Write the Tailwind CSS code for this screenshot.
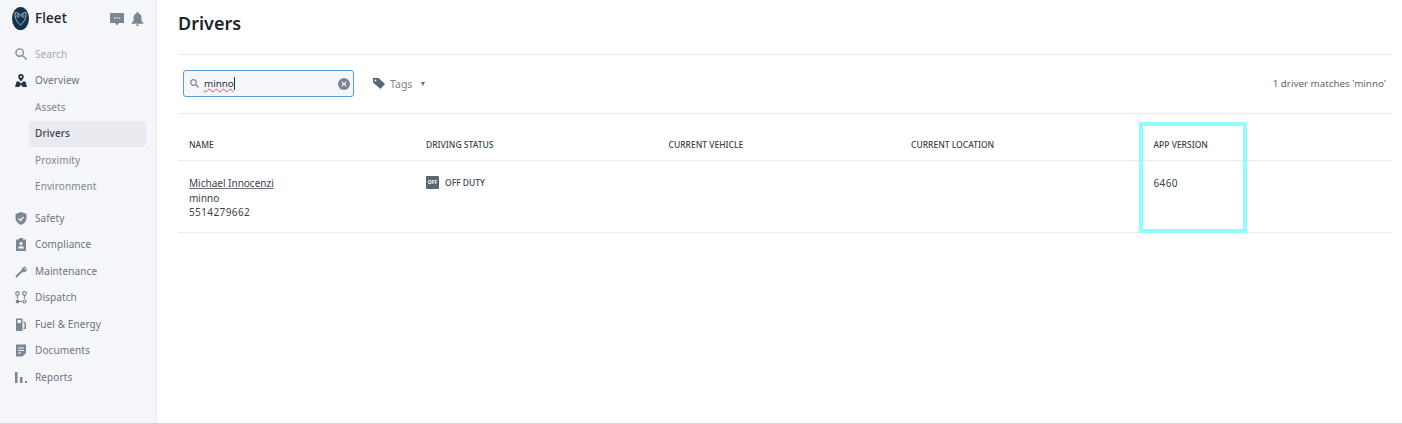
<!DOCTYPE html>
<html lang="en">
<head>
  <meta charset="UTF-8" />
  <title>Fleet - Drivers</title>
  <script src="https://cdn.jsdelivr.net/npm/@tailwindcss/browser@4"></script>
</head>
<body class="bg-white text-[#2b2f36] font-['Noto_Sans',sans-serif] overflow-hidden">
  <div class="flex h-[423px] w-[1402px] border-b border-[#d5d7da] box-content">
    <!-- Sidebar -->
    <aside class="w-[157px] shrink-0 bg-[#f5f6f9] border-r border-[#eceef2] pt-[5px] text-[10px] tracking-[0.1px] text-[#6b7480]">
      <div class="flex items-center h-[27px] pl-[12px] pr-[12px]">
        <svg class="w-[17px] h-[23px]" viewBox="0 0 17 23"><ellipse cx="8.5" cy="11.5" rx="8.5" ry="11.5" fill="#12344a"/><path d="M3 5.500c2 0 4 1 5.500 2.500C10 6.500 12 5.500 14 5.500c.5 4-1 9-5.500 12.500C4 14.500 2.500 9.500 3 5.500z" fill="none" stroke="#b9c6cf" stroke-width=".9"/><circle cx="6" cy="9" r="1.300" fill="none" stroke="#b9c6cf" stroke-width=".7"/><circle cx="11" cy="9" r="1.300" fill="none" stroke="#b9c6cf" stroke-width=".7"/></svg>
        <span class="ml-[6px] text-[13.500px] font-medium text-[#1e2329]">Fleet</span>
        <svg class="ml-auto w-[14px] h-[14px]" viewBox="0 0 14 14" fill="#7c8794"><path d="M0 1h14v10H9l-2 2.500L5 11H0z"/><circle cx="4.500" cy="6" r=".8" fill="#f5f6f9"/><circle cx="7" cy="6" r=".8" fill="#f5f6f9"/><circle cx="9.500" cy="6" r=".8" fill="#f5f6f9"/></svg>
        <svg class="ml-[7px] w-[13px] h-[14px]" viewBox="0 0 13 14" fill="#7c8794"><path d="M6.500 0a1 1 0 0 1 1 1.200C9.500 1.800 10.500 3.500 10.500 6v3l2 2v.8H.5V11l2-2V6c0-2.500 1-4.200 3-4.800A1 1 0 0 1 6.500 0zM5 12.500h3a1.500 1.500 0 0 1-3 0z"/></svg>
      </div>
      <nav class="mt-[9px]">
        <div class="flex items-center h-[26.5px] text-[#a3aab3]">
          <svg class="ml-[15px] w-[12px] h-[12px]" viewBox="0 0 13 13" fill="none" stroke="#7c8794" stroke-width="1.500"><circle cx="5" cy="5" r="4"/><path d="M8 8l4.500 4.500"/></svg>
          <span class="ml-[8px]">Search</span>
        </div>
        <div class="flex items-center h-[26.5px]">
          <svg class="ml-[15px] w-[12px] h-[13px]" viewBox="0 0 12 13" fill="#243746"><path fill-rule="evenodd" d="M6 0a2.800 2.800 0 0 1 2.800 2.800C8.800 4.500 6 7.500 6 7.500S3.200 4.500 3.200 2.800A2.800 2.800 0 0 1 6 0zm0 1.800a1 1 0 1 0 0 2 1 1 0 0 0 0-2z"/><path d="M1.500 7.500h2.500L6 9.500l2-2h2.500L12 13H8L6 11 4 13H0z"/></svg>
          <span class="ml-[8px]">Overview</span>
        </div>
        <div class="flex items-center h-[26.5px] pl-[35px] text-[#7d858f]">Assets</div>
        <div class="flex items-center h-[26.5px] ml-[29px] mr-[10px] pl-[6px] rounded-[4px] bg-[#e8eaef] text-[#3a3f4a] font-medium">Drivers</div>
        <div class="flex items-center h-[26.5px] pl-[35px] text-[#7d858f]">Proximity</div>
        <div class="flex items-center h-[26.5px] pl-[35px] text-[#7d858f]">Environment</div>
        <div class="mt-[5px]">
          <div class="flex items-center h-[26.5px]">
            <svg class="ml-[15px] w-[12px] h-[13px]" viewBox="0 0 12 13" fill="#7c8794"><path d="M6 0l5.500 2v4c0 3.200-2.200 5.800-5.500 7C2.700 11.800.5 9.200.5 6V2z"/><path d="M3.500 6.500l2 2 3-3.500" fill="none" stroke="#f5f6f9" stroke-width="1.200"/></svg>
            <span class="ml-[8px]">Safety</span>
          </div>
          <div class="flex items-center h-[26.5px]">
            <svg class="ml-[15px] w-[12px] h-[13px]" viewBox="0 0 12 13" fill="#7c8794"><path d="M1 1.500h3V0h4v1.500h3V13H1z"/><circle cx="6" cy="5.500" r="1.500" fill="#f5f6f9"/><path d="M3 10.500c0-1.500 1.500-2.500 3-2.500s3 1 3 2.500z" fill="#f5f6f9"/></svg>
            <span class="ml-[8px]">Compliance</span>
          </div>
          <div class="flex items-center h-[26.5px]">
            <svg class="ml-[15px] w-[12px] h-[13px]" viewBox="0 0 12 13" fill="none" stroke="#7c8794" stroke-width="2"><path d="M1 12l6-6"/><path d="M7 6.500C6 4 8 1.500 11 2L9 4l1 1 2-1.500C12 6.500 9.500 7.500 7 6.500z" fill="#7c8794" stroke-width=".5"/></svg>
            <span class="ml-[8px]">Maintenance</span>
          </div>
          <div class="flex items-center h-[26.5px]">
            <svg class="ml-[15px] w-[12px] h-[13px]" viewBox="0 0 12 13" fill="none" stroke="#7c8794" stroke-width="1.200"><circle cx="2.500" cy="2.500" r="1.800"/><circle cx="9.500" cy="2.500" r="1.800"/><path d="M2.500 4.500v3M9.500 4.500v3M2.500 10.500h5"/><circle cx="2.500" cy="10.500" r="1.300" fill="#7c8794"/><circle cx="9.500" cy="10.500" r="1.500"/></svg>
            <span class="ml-[8px]">Dispatch</span>
          </div>
          <div class="flex items-center h-[26.5px]">
            <svg class="ml-[15px] w-[12px] h-[13px]" viewBox="0 0 12 13" fill="#7c8794"><path d="M1 .5h6.500V13H1z"/><path d="M8.500 3l2.500 2v6h-2.500V9.500h1V5.500l-1-1z"/><rect x="2.500" y="2" width="3.500" height="3" fill="#f5f6f9"/></svg>
            <span class="ml-[8px]">Fuel &amp; Energy</span>
          </div>
          <div class="flex items-center h-[26.5px]">
            <svg class="ml-[15px] w-[12px] h-[13px]" viewBox="0 0 12 13" fill="#7c8794"><path d="M1 .5h10v8.500L7.500 12.500H1z"/><path d="M3 4h6M3 6.500h6M3 9h3" stroke="#f5f6f9" stroke-width="1"/></svg>
            <span class="ml-[8px]">Documents</span>
          </div>
          <div class="flex items-center h-[26.5px]">
            <svg class="ml-[15px] w-[12px] h-[13px]" viewBox="0 0 12 13" fill="#7c8794"><rect x="0" y="1" width="2.500" height="11"/><rect x="5" y="6" width="2.500" height="6"/><rect x="10" y="10" width="2" height="2"/></svg>
            <span class="ml-[8px]">Reports</span>
          </div>
        </div>
      </nav>
    </aside>

    <!-- Main -->
    <main class="relative flex-1 pl-[21px] pr-[10px]">
      <h1 class="h-[55px] pt-[10px] text-[18px] leading-[27px] font-semibold text-[#1e2329] border-b border-[#e9ebee]">Drivers</h1>

      <!-- Toolbar -->
      <div class="flex items-center h-[59px] pl-[5px] pr-[6px] pb-[1px] border-b border-[#e9ebee]">
        <div class="flex items-center w-[171px] h-[27px] rounded-[3px] border border-[#5b9bdc] bg-[#f5f6f9] pl-[6px] pr-[3px]">
          <svg class="w-[9px] h-[9px]" viewBox="0 0 9 9" fill="none" stroke="#7c8794" stroke-width="1.200"><circle cx="3.500" cy="3.500" r="2.800"/><path d="M5.500 5.500L8.500 8.500"/></svg>
          <span class="ml-[5px] text-[9.800px] text-[#2b2f36] underline decoration-wavy decoration-[#e0524d] decoration-[1px] border-r border-[#2b2f36] leading-[13px]">minno</span>
          <svg class="ml-auto w-[12px] h-[12px]" viewBox="0 0 12 12"><circle cx="6" cy="6" r="6" fill="#7c8794"/><path d="M3.800 3.800l4.400 4.400M8.200 3.800L3.800 8.200" stroke="#f5f6f9" stroke-width="1.200"/></svg>
        </div>
        <svg class="ml-[19px] w-[12px] h-[11px]" viewBox="0 0 12 11" fill="#5c6670"><path d="M0 0h5.500L12 6l-4.500 5L0 4.500z"/><circle cx="2.500" cy="2.500" r=".9" fill="#fff"/></svg>
        <span class="ml-[5px] mt-[2px] text-[10.500px] text-[#7d858f]">Tags</span>
        <span class="ml-[9px] w-0 h-0 border-x-[2.500px] border-x-transparent border-t-[4px] border-t-[#5c6670]"></span>
        <span class="ml-auto mt-[2px] text-[9.800px] text-[#5c6670]">1 driver matches 'minno'</span>
      </div>

      <!-- Table -->
      <div class="grid grid-cols-[237px_242.5px_242.5px_242.5px_1fr] h-[47px] items-center pl-[11px] border-b border-[#e9ebee] text-[8.500px] font-medium text-[#3a3f4a] pt-[17px]">
        <div>NAME</div>
        <div>DRIVING STATUS</div>
        <div>CURRENT VEHICLE</div>
        <div>CURRENT LOCATION</div>
        <div>APP VERSION</div>
      </div>
      <div class="grid grid-cols-[237px_242.5px_242.5px_242.5px_1fr] h-[72px] pl-[11px] pt-[15px] border-b border-[#e9ebee] text-[10px] leading-[14.500px] text-[#3a3f4a]">
        <div>
          <div class="underline decoration-[#6b7480]">Michael Innocenzi</div>
          <div>minno</div>
          <div class="tracking-[0.4px]">5514279662</div>
        </div>
        <div class="flex items-start">
          <span class="flex items-center justify-center w-[13px] h-[13px] rounded-[1px] bg-[#5c6670] text-[5px] font-bold text-white">OFF</span>
          <span class="ml-[6px] text-[8.500px] leading-[13px] font-medium">OFF DUTY</span>
        </div>
        <div></div>
        <div></div>
        <div class="tracking-[0.4px]">6460</div>
      </div>

      <!-- Highlight box drawn over the column -->
      <div class="absolute left-[982px] top-[122px] w-[108px] h-[111px] border-[4px] border-[#8effff]"></div>
    </main>
  </div>
</body>
</html>
